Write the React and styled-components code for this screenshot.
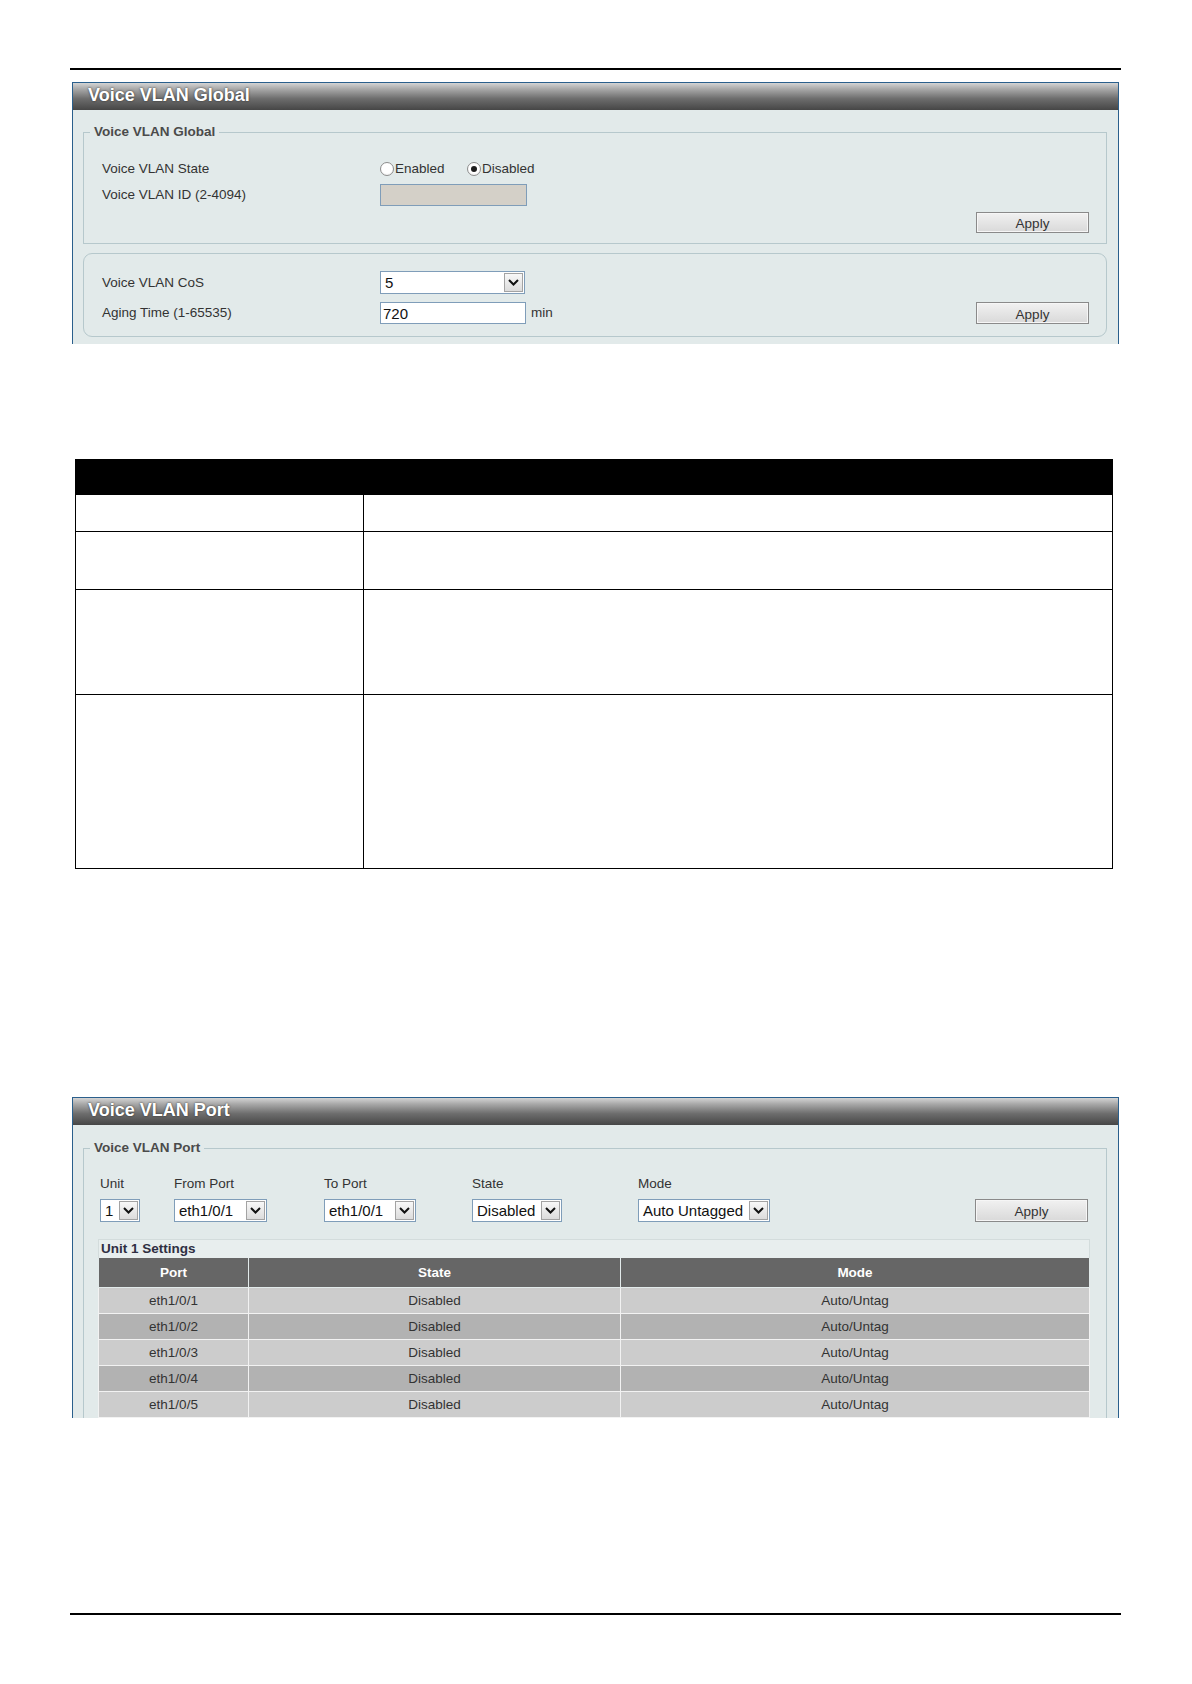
import styled, { createGlobalStyle } from "styled-components"

const FONT = `"Liberation Sans", Arial, sans-serif`

const GlobalStyle = createGlobalStyle`
    html, body {
        margin: 0;
        padding: 0;
        background: #fff;
    }
    body {
        font-family: ${FONT};
        color: #333;
    }
`

const Page = styled.div`
    width: 1192px;
    height: 1684px;
    box-sizing: border-box;
    padding: 68px 0 0 70px;
    overflow: hidden;
`

const Rule = styled.div`
    width: 1051px;
    height: 2px;
    background: #000;
    margin-top: ${p => p.$top || 0}px;
`

const Panel = styled.section`
    width: 1047px;
    box-sizing: border-box;
    margin: ${p => p.$top}px 0 0 2px;
    border: 1px solid #2a5f8c;
    border-bottom: 0;
    background: #e2eaea;
`

const PanelTitle = styled.div`
    height: 27px;
    padding-left: 15px;
    background: linear-gradient(to bottom, #d4d4d4 0%, #a9a9a9 22%, #6d6d6d 58%, #464646 100%);
    color: #fff;
    font: bold 18px/24px ${FONT};
    text-shadow: 0 0 2px #2a2a2a;
`

const PanelBody = styled.div`
    padding: ${p => p.$pad};
`

const Fieldset = styled.fieldset`
    margin: 0;
    padding: 0;
    min-width: 0;
    border: 1px solid #b6c8cc;
    border-bottom: ${p => (p.$open ? "0" : "1px solid #b6c8cc")};
`

const Legend = styled.legend`
    margin-left: 6px;
    padding: 0 4px;
    font: bold 13.5px/16px ${FONT};
    color: #4b4b4b;
`

const Group = styled.div`
    margin-top: 9px;
    border: 1px solid #b6c8cc;
    border-radius: 9px;
    padding: 17px 17px 12px 18px;
`

const FieldsetContent = styled.div`
    padding: ${p => p.$pad};
`

const FormRow = styled.div`
    display: grid;
    grid-template-columns: 278px 1fr;
    align-items: center;
    height: ${p => p.$h}px;
    margin-top: ${p => p.$gap || 0}px;
`

const Label = styled.span`
    font: 13.5px/16px ${FONT};
    color: #333;
    white-space: nowrap;
`

const Controls = styled.div`
    display: flex;
    align-items: center;
`

const RadioOption = styled.label`
    display: inline-flex;
    align-items: center;
    width: ${p => p.$w}px;
    font: 13.5px/16px ${FONT};
    color: #333;
`

const RadioDot = styled.span`
    position: relative;
    width: 14px;
    height: 14px;
    box-sizing: border-box;
    margin-right: 1px;
    border: 1px solid #8d8d8d;
    border-radius: 50%;
    background: radial-gradient(circle at 50% 40%, #fff 55%, #e4e4e4 100%);

    &::after {
        content: "";
        display: ${p => (p.$checked ? "block" : "none")};
        position: absolute;
        inset: 3px;
        border-radius: 50%;
        background: #1e1e1e;
    }
`

const TextInput = styled.input`
    width: ${p => p.$w}px;
    height: 22px;
    box-sizing: border-box;
    margin: 0;
    padding: 0 2px;
    border: 1px solid #7f9db9;
    background: ${p => (p.disabled ? "#d4d0c8" : "#fff")};
    font: 15px ${FONT};
    color: #111;
    outline: none;
`

const Unit = styled.span`
    margin-left: 5px;
    font: 13.5px/16px ${FONT};
    color: #333;
`

const ApplyButton = styled.button`
    width: 113px;
    height: ${p => p.$h || 21}px;
    margin-left: auto;
    padding: 0;
    box-sizing: border-box;
    border: 1px solid #8a8a8a;
    box-shadow: inset 0 0 0 1px #f6f6f6;
    background: linear-gradient(to bottom, #f1f1f1, #d9d9d9);
    font: 13.5px ${FONT};
    color: #333;
    padding-top: 2px;
`

const ButtonRow = styled.div`
    display: flex;
    margin-top: 5px;
`

const SelectBox = styled.div`
    display: flex;
    align-items: stretch;
    width: ${p => p.$w}px;
    height: ${p => p.$h || 23}px;
    box-sizing: border-box;
    padding: 1px;
    border: 1px solid #7f9db9;
    background: #fff;
    font: 15px/19px ${FONT};
    color: #111;
`

const SelectText = styled.span`
    flex: 1;
    padding-left: 3px;
    white-space: nowrap;
    overflow: hidden;
`

const ArrowBox = styled.span`
    display: flex;
    align-items: center;
    justify-content: center;
    width: 19px;
    box-sizing: border-box;
    border: 1px solid #a3a3a3;
    background: linear-gradient(to bottom, #f8f8f8, #dcdcdc);
`

function Select({ value, width, height }) {
    return (
        <SelectBox $w={width} $h={height}>
            <SelectText>{value}</SelectText>
            <ArrowBox>
                <svg width="11" height="7" viewBox="0 0 11 7">
                    <path d="M1 1 L5.5 5.5 L10 1" fill="none" stroke="#111" strokeWidth="2" />
                </svg>
            </ArrowBox>
        </SelectBox>
    )
}

/* description table between the two panels */
const DescTable = styled.table`
    margin: 115px 0 0 5px;
    width: 1038px;
    border-collapse: collapse;
    table-layout: fixed;
`

const DescRow = styled.tr`
    height: ${p => p.$h}px;
`

const DescHead = styled.th`
    padding: 0;
    background: #000;
    border: 1px solid #000;
`

const DescCell = styled.td`
    padding: 0;
    border: 1px solid #000;
`

/* port settings */
const PortControls = styled.div`
    display: flex;
    align-items: flex-end;
    margin: 0 2px;
`

const PortField = styled.div`
    display: flex;
    flex-direction: column;
    gap: 7px;
    width: ${p => (p.$w ? `${p.$w}px` : "auto")};
`

const SettingsBar = styled.div`
    margin-top: 17px;
    height: 19px;
    box-sizing: border-box;
    padding-left: 2px;
    border: 1px solid #d3dcdc;
    border-bottom: 0;
    background: #e8eeee;
    font: bold 13.5px/18px ${FONT};
    color: #2f2f42;
`

const PortTable = styled.table`
    width: 100%;
    border-collapse: collapse;
    table-layout: fixed;
`

const PortHead = styled.th`
    height: 29px;
    padding: 0;
    background: #666;
    border: 1px solid #e2eaea;
    border-top: 0;
    color: #fff;
    font: bold 13.5px ${FONT};
`

const PortCell = styled.td`
    height: 25px;
    padding: 0;
    text-align: center;
    background: ${p => (p.$odd ? "#b2b2b2" : "#cccccc")};
    border: 1px solid #f2f2f2;
    font: 13.5px ${FONT};
    color: #333;
`

const ports = ["eth1/0/1", "eth1/0/2", "eth1/0/3", "eth1/0/4", "eth1/0/5"]

export default function App() {
    return (
        <Page>
            <GlobalStyle />
            <Rule />

            <Panel $top={12}>
                <PanelTitle>Voice VLAN Global</PanelTitle>
                <PanelBody $pad="14px 11px 7px 10px">
                    <Fieldset>
                        <Legend>Voice VLAN Global</Legend>
                        <FieldsetContent $pad="17px 17px 10px 18px">
                            <FormRow $h={24}>
                                <Label>Voice VLAN State</Label>
                                <Controls>
                                    <RadioOption $w={87}>
                                        <RadioDot />
                                        Enabled
                                    </RadioOption>
                                    <RadioOption $w={90}>
                                        <RadioDot $checked />
                                        Disabled
                                    </RadioOption>
                                </Controls>
                            </FormRow>
                            <FormRow $h={24} $gap={2}>
                                <Label>Voice VLAN ID (2-4094)</Label>
                                <Controls>
                                    <TextInput $w={147} disabled />
                                </Controls>
                            </FormRow>
                            <ButtonRow>
                                <ApplyButton>Apply</ApplyButton>
                            </ButtonRow>
                        </FieldsetContent>
                    </Fieldset>

                    <Group>
                        <FormRow $h={23}>
                            <Label>Voice VLAN CoS</Label>
                            <Controls>
                                <Select value="5" width={145} />
                            </Controls>
                        </FormRow>
                        <FormRow $h={22} $gap={8}>
                            <Label>Aging Time (1-65535)</Label>
                            <Controls>
                                <TextInput $w={146} defaultValue="720" />
                                <Unit>min</Unit>
                                <ApplyButton $h={22}>Apply</ApplyButton>
                            </Controls>
                        </FormRow>
                    </Group>
                </PanelBody>
            </Panel>

            <DescTable>
                <colgroup>
                    <col style={{ width: 288 }} />
                    <col />
                </colgroup>
                <thead>
                    <DescRow $h={35}>
                        <DescHead />
                        <DescHead />
                    </DescRow>
                </thead>
                <tbody>
                    {[37, 58, 105, 174].map(h => (
                        <DescRow key={h} $h={h}>
                            <DescCell />
                            <DescCell />
                        </DescRow>
                    ))}
                </tbody>
            </DescTable>

            <Panel $top={228}>
                <PanelTitle>Voice VLAN Port</PanelTitle>
                <PanelBody $pad="15px 11px 0 10px">
                    <Fieldset $open>
                        <Legend>Voice VLAN Port</Legend>
                        <FieldsetContent $pad="20px 16px 0 14px">
                            <PortControls>
                                <PortField $w={74}>
                                    <Label>Unit</Label>
                                    <Select value="1" width={40} />
                                </PortField>
                                <PortField $w={150}>
                                    <Label>From Port</Label>
                                    <Select value="eth1/0/1" width={93} />
                                </PortField>
                                <PortField $w={148}>
                                    <Label>To Port</Label>
                                    <Select value="eth1/0/1" width={92} />
                                </PortField>
                                <PortField $w={166}>
                                    <Label>State</Label>
                                    <Select value="Disabled" width={90} />
                                </PortField>
                                <PortField>
                                    <Label>Mode</Label>
                                    <Select value="Auto Untagged" width={132} />
                                </PortField>
                                <ApplyButton $h={23}>Apply</ApplyButton>
                            </PortControls>

                            <SettingsBar>Unit 1 Settings</SettingsBar>
                            <PortTable>
                                <colgroup>
                                    <col style={{ width: 150 }} />
                                    <col style={{ width: 372 }} />
                                    <col />
                                </colgroup>
                                <thead>
                                    <tr>
                                        <PortHead>Port</PortHead>
                                        <PortHead>State</PortHead>
                                        <PortHead>Mode</PortHead>
                                    </tr>
                                </thead>
                                <tbody>
                                    {ports.map((port, i) => (
                                        <tr key={port}>
                                            <PortCell $odd={i % 2 === 1}>{port}</PortCell>
                                            <PortCell $odd={i % 2 === 1}>Disabled</PortCell>
                                            <PortCell $odd={i % 2 === 1}>Auto/Untag</PortCell>
                                        </tr>
                                    ))}
                                </tbody>
                            </PortTable>
                        </FieldsetContent>
                    </Fieldset>
                </PanelBody>
            </Panel>

            <Rule $top={195} />
        </Page>
    )
}
